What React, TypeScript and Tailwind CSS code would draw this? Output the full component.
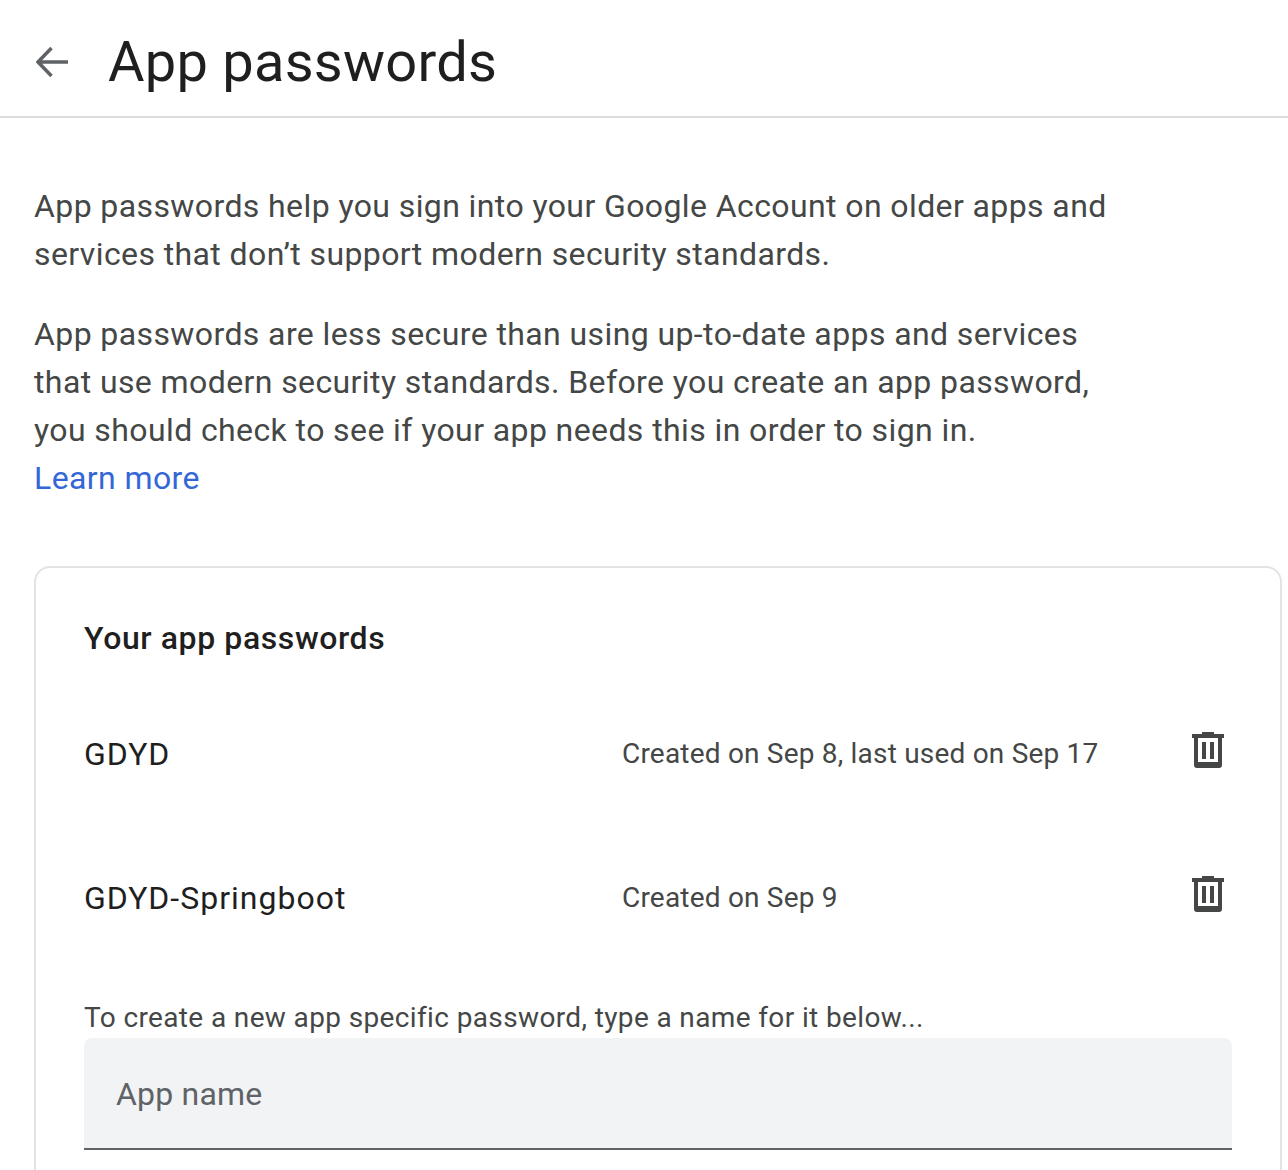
const roboto = "font-['Roboto',sans-serif]";

function TrashIcon() {
  return (
    <svg width="36" height="36" viewBox="0 0 36 36" className="shrink-0 text-[#444746]" fill="currentColor">
      <path d="M10 0h12v2h10v4H0V2h10z" />
      <path fillRule="evenodd" d="M2 6h28v27a3 3 0 0 1-3 3H5a3 3 0 0 1-3-3zM6 6v24h20V6z" />
      <rect x="10" y="10" width="4" height="17" />
      <rect x="18" y="10" width="4" height="17" />
    </svg>
  );
}

function PasswordRow({ name, meta }: { name: string; meta: string }) {
  return (
    <div className="flex h-[144px] items-start pt-[13px]">
      <div className="w-[538px] shrink-0 pt-[6px] text-[32px] leading-[40px] tracking-[1px] text-[#1f1f1f]">{name}</div>
      <div className="flex-1 pt-[6px] text-[28px] leading-[40px] tracking-[0.2px] text-[#444746]">{meta}</div>
      <div className="mr-[4px] pt-[4px]">
        <TrashIcon />
      </div>
    </div>
  );
}

export default function App() {
  return (
    <div className={`h-[1170px] w-[1288px] overflow-hidden bg-white ${roboto}`}>
      {/* Header */}
      <header className="flex h-[118px] items-center border-b-2 border-[#dadce0] pt-[8px] pl-[36px]">
        <svg width="32" height="32" viewBox="0 0 32 32" fill="none" className="shrink-0 text-[#5f6368]">
          <path d="M32 16H3M15.500 2 2 16l13.500 14" stroke="currentColor" strokeWidth="3.500" />
        </svg>
        <h1 className="ml-[40px] text-[56px] leading-[64px] font-normal tracking-[0.25px] text-[#1f1f1f]">App passwords</h1>
      </header>

      <main className="pt-[64px] pl-[34px]">
        <div className="text-[32px] leading-[48px] tracking-[0.4px] text-[#444746]">
          <p>
            App passwords help you sign into your Google Account on older apps and
            <br />
            services that don’t support modern security standards.
          </p>
          <p className="mt-[32px]">
            App passwords are less secure than using up-to-date apps and services
            <br />
            that use modern security standards. Before you create an app password,
            <br />
            you should check to see if your app needs this in order to sign in.
            <br />
            <a className="text-[#3367d6]">Learn more</a>
          </p>
        </div>

        {/* Card */}
        <section className="mt-[64px] mr-[6px] h-[700px] rounded-t-[16px] border-2 border-[#e3e3e3] px-[48px] pt-[50px]">
          <h2 className="text-[32px] leading-[40px] font-medium tracking-[0.6px] text-[#1f1f1f]">Your app passwords</h2>
          <div className="mt-[57px]">
            <PasswordRow name="GDYD" meta="Created on Sep 8, last used on Sep 17" />
            <PasswordRow name="GDYD-Springboot" meta="Created on Sep 9" />
          </div>
          <p className="mt-[-5px] text-[28px] leading-[40px] tracking-[0.37px] text-[#444746]">
            To create a new app specific password, type a name for it below...
          </p>
          <div className="flex h-[112px] items-center rounded-t-[8px] border-b-2 border-[#5f6368] bg-[#f1f3f4] pt-[2px] pl-[32px] text-[32px] tracking-[0.2px] text-[#5f6368]">
            App name
          </div>
        </section>
      </main>
    </div>
  );
}
